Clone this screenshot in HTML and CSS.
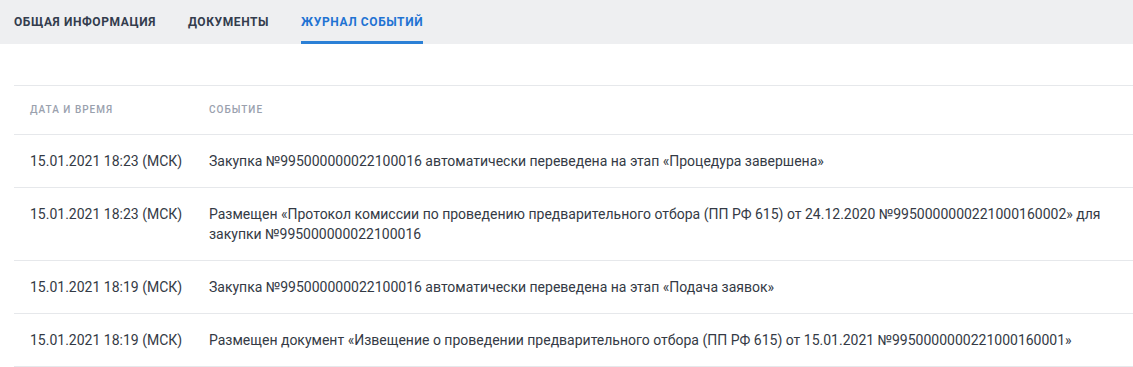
FILE: index.html
```html
<!DOCTYPE html>
<html>
<head>
  <link rel="stylesheet" href="styles.css">
</head>
<body>
  <nav class="tabs">
    <a class="tab">Общая информация</a>
    <a class="tab">Документы</a>
    <a class="tab tab-active">Журнал событий</a>
  </nav>

  <table class="events">
    <thead>
      <tr>
        <th class="col-date">Дата и время</th>
        <th>Событие</th>
      </tr>
    </thead>
    <tbody>
      <tr>
        <td class="col-date">15.01.2021 18:23 (МСК)</td>
        <td>Закупка №995000000022100016 автоматически переведена на этап «Процедура завершена»</td>
      </tr>
      <tr>
        <td class="col-date">15.01.2021 18:23 (МСК)</td>
        <td>Размещен «Протокол комиссии по проведению предварительного отбора (ПП РФ 615) от 24.12.2020 №9950000000221000160002» для закупки №995000000022100016</td>
      </tr>
      <tr>
        <td class="col-date">15.01.2021 18:19 (МСК)</td>
        <td>Закупка №995000000022100016 автоматически переведена на этап «Подача заявок»</td>
      </tr>
      <tr>
        <td class="col-date">15.01.2021 18:19 (МСК)</td>
        <td>Размещен документ «Извещение о проведении предварительного отбора (ПП РФ 615) от 15.01.2021 №9950000000221000160001»</td>
      </tr>
    </tbody>
  </table>
</body>
</html>
```

FILE: styles.css
```css
body {
  margin: 0;
  background: #fff;
  font-family: Roboto, "Liberation Sans", sans-serif;
  color: #343a45;
}

/* Tabs */
.tabs {
  display: flex;
  gap: 32px;
  height: 44px;
  padding: 0 14px;
  background-color: #eeeff1;
}

.tab {
  display: flex;
  align-items: center;
  font-size: 12px;
  font-weight: 700;
  letter-spacing: 0.6px;
  text-transform: uppercase;
  color: #333c4d;
  border-bottom: 3px solid transparent;
  padding-top: 3px;
  box-sizing: border-box;
  cursor: pointer;
}

.tab-active {
  color: #1f73d3;
  border-bottom-color: #2b80d6;
}

/* Events table */
.events {
  margin: 41px 0 0 14px;
  width: calc(100% - 14px);
  table-layout: fixed;
  border-collapse: collapse;
  font-size: 14px;
  line-height: 20px;
}

.events th,
.events td {
  text-align: left;
  vertical-align: top;
  border-top: 1px solid #e6e8eb;
  border-bottom: 1px solid #e6e8eb;
}

.events th {
  font-size: 10px;
  font-weight: 500;
  letter-spacing: 1px;
  text-transform: uppercase;
  color: #9aa1ae;
  padding: 14px 16px 14px;
}

.events td {
  padding: 16px 16px 16px;
}

.col-date {
  width: 147px;
  white-space: nowrap;
}
```
